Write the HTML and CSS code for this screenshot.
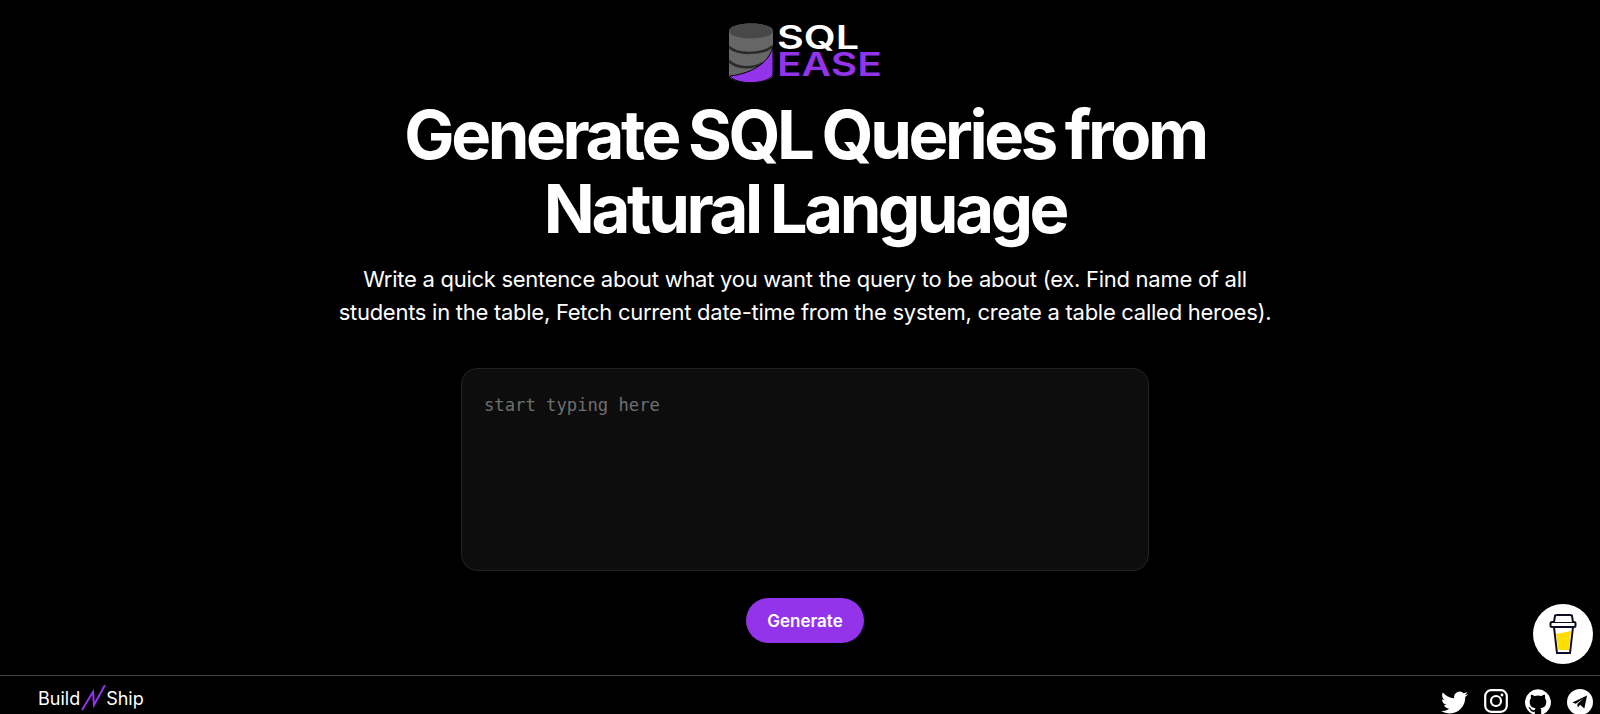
FILE: index.html
```html
<!DOCTYPE html>
<html>
<head>
<meta charset="UTF-8">
<title>SQL Ease</title>
<link rel="stylesheet" href="styles.css">
</head>
<body>

<main class="main">
  <a href="#" class="logo">
    <svg width="44" height="60" viewBox="0 0 44 60">
      <path d="M0 8 C0 -2 44 -2 44 8 L44 52 C44 62 0 62 0 52 Z" fill="#666"/>
      <ellipse cx="22" cy="8" rx="22" ry="7.5" fill="#484848"/>
      <path d="M0 24 C8 32 34 32 44 23" fill="none" stroke="#2a2a2a" stroke-width="2.5"/>
      <path d="M0 38 C8 46 24 46 34 40" fill="none" stroke="#2a2a2a" stroke-width="2.5"/>
      <path d="M44 24 C40 38 26 50 1 53 C6 62 38 62 44 52 Z" fill="#9333ea" stroke="#000" stroke-width="1"/>
    </svg>
    <span class="logo-text">
      <span class="logo-sql">SQL</span>
      <span class="logo-ease">EASE</span>
    </span>
  </a>

  <h1 class="title">Generate SQL Queries from<br>Natural Language</h1>

  <p class="subtitle">Write a quick sentence about what you want the query to be about (ex. Find name of all<br>students in the table, Fetch current date-time from the system, create a table called heroes).</p>

  <textarea class="query" placeholder="start typing here"></textarea>

  <button type="button" class="generate">Generate</button>
</main>

<footer class="footer">
  <a href="#" class="brand">
    Build
    <svg width="26" height="26" viewBox="0 0 26 26">
      <path d="M2 25 L13 7 L14 20 L25 0" fill="none" stroke="#9333ea" stroke-width="2"/>
    </svg>
    Ship
  </a>
  <div class="socials">
    <a href="#"><svg width="27" height="27" viewBox="0 0 24 24" fill="#fff"><path d="M23.95 4.57a10 10 0 0 1-2.82.77 4.96 4.96 0 0 0 2.16-2.72c-.95.55-2 .96-3.13 1.19a4.92 4.92 0 0 0-8.38 4.48C7.69 8.1 4.07 6.13 1.64 3.16a4.82 4.82 0 0 0-.66 2.47c0 1.71.87 3.21 2.19 4.09a4.9 4.9 0 0 1-2.23-.61v.06a4.92 4.92 0 0 0 3.95 4.83 5 5 0 0 1-2.21.08 4.94 4.94 0 0 0 4.6 3.42A9.87 9.87 0 0 1 0 19.54a14 14 0 0 0 7.56 2.21c9.05 0 14-7.5 14-13.98 0-.21 0-.42-.02-.63a9.94 9.94 0 0 0 2.46-2.55z"/></svg></a>
    <a href="#"><svg width="24" height="24" viewBox="0 0 24 24" fill="none" stroke="#fff"><rect x="1.2" y="1.2" width="21.6" height="21.6" rx="6" stroke-width="2.2"/><circle cx="12" cy="12" r="5" stroke-width="2.2"/><circle cx="18" cy="6" r="1.4" fill="#fff" stroke="none"/></svg></a>
    <a href="#"><svg width="26" height="26" viewBox="0 0 24 24" fill="#fff"><path d="M12 .3a12 12 0 0 0-3.8 23.38c.6.11.82-.26.82-.58l-.01-2.04c-3.34.72-4.04-1.61-4.04-1.61-.55-1.39-1.34-1.76-1.34-1.76-1.09-.74.08-.73.08-.73 1.2.09 1.84 1.24 1.84 1.24 1.07 1.83 2.81 1.3 3.5 1 .1-.78.42-1.31.76-1.61-2.67-.3-5.47-1.33-5.47-5.93 0-1.31.47-2.38 1.24-3.22-.14-.3-.54-1.52.1-3.18 0 0 1-.32 3.3 1.23a11.5 11.5 0 0 1 6 0c2.28-1.55 3.29-1.23 3.29-1.23.64 1.66.24 2.88.12 3.18a4.65 4.65 0 0 1 1.23 3.22c0 4.61-2.8 5.63-5.48 5.92.42.36.81 1.1.81 2.22l-.01 3.29c0 .32.21.7.82.58A12 12 0 0 0 12 .3"/></svg></a>
    <a href="#"><svg width="26" height="26" viewBox="0 0 24 24"><circle cx="12" cy="12" r="12" fill="#fff"/><path d="M5 12.5 L18.5 6 L16 18 L12 14.5 L10 17 L9.5 13.8 L15.5 8.5 L8 13.5 Z" fill="#000"/></svg></a>
  </div>
</footer>

<a href="#" class="coffee">
  <svg width="28" height="42" viewBox="0 0 28 42">
    <path d="M5 14 L24 14 L21 40 L8 40 Z" fill="#fff" stroke="#0d0c22" stroke-width="2"/>
    <path d="M7 21 L22 18 L20 37 L9.5 37 Z" fill="#ffdd00"/>
    <rect x="1.5" y="9" width="25" height="5" rx="1.5" fill="#fff" stroke="#0d0c22" stroke-width="2"/>
    <path d="M5 9 L6 3 Q6 2 8 2 L21 2 Q23 2 23 3 L24 9" fill="#fff" stroke="#0d0c22" stroke-width="2"/>
  </svg>
</a>

</body>
</html>
```

FILE: styles.css
```css
html, body {
  height: 100%;
}

body {
  margin: 0;
  background-color: #000;
  color: #fff;
  font-family: "Inter", "Liberation Sans", sans-serif;
  overflow: hidden;
}

a {
  color: #fff;
  text-decoration: none;
}

.main {
  height: 675px;
  box-sizing: border-box;
  padding: 23px 0 0 10px;
  display: flex;
  flex-direction: column;
  align-items: center;
}

.logo {
  display: flex;
  width: 153px;
  height: 60px;
  gap: 4px;
}

.logo-text {
  display: flex;
  flex-direction: column;
  gap: 3px;
  padding-top: 3px;
}

/* no squared font installed, so stretch the letters sideways */
.logo-sql, .logo-ease {
  display: block;
  height: 24px;
  font-size: 32px;
  line-height: 24px;
  font-weight: 600;
  transform-origin: left center;
}

.logo-sql {
  color: #fff;
  transform: scaleX(1.29);
}

.logo-ease {
  color: #9333ea;
  transform: scaleX(1.27);
}

.title {
  margin: 15px 0 0 0;
  font-size: 67px;
  line-height: 74px;
  font-weight: 700;
  letter-spacing: -3.4px;
  word-spacing: -2.5px;
  text-align: center;
}

.subtitle {
  margin: 17px 0 0 0;
  font-size: 22px;
  line-height: 33px;
  letter-spacing: -0.27px;
  text-align: center;
}

.query {
  width: 688px;
  height: 203px;
  margin-top: 39px;
  padding: 26px 22px 22px 22px;
  box-sizing: border-box;
  background-color: #0d0d0d;
  border: 1px solid #222;
  border-radius: 16px;
  color: #fff;
  font-family: "DejaVu Sans Mono", monospace;
  font-size: 17.2px;
  resize: none;
  outline: none;
}

.query::placeholder {
  color: #6f6f6f;
  opacity: 1;
}

.generate {
  display: block;
  width: 118px;
  height: 45px;
  margin-top: 27px;
  background-color: #9333ea;
  color: #fff;
  border: none;
  border-radius: 23px;
  font-family: "Inter", sans-serif;
  font-size: 17px;
  font-weight: 600;
  cursor: pointer;
}

.footer {
  height: 39px;
  box-sizing: border-box;
  border-top: 1px solid #444;
  padding: 9px 7px 0 38px;
  display: flex;
  justify-content: space-between;
  align-items: flex-start;
}

.brand {
  display: flex;
  align-items: center;
  height: 26px;
  font-size: 18px;
}

.socials {
  display: flex;
  align-items: center;
  gap: 16.5px;
  margin-top: 4px;
}

.socials a {
  display: block;
  height: 27px;
}

.coffee {
  position: absolute;
  left: 1533px;
  top: 604px;
  width: 60px;
  height: 60px;
  border-radius: 50%;
  background-color: #fff;
  display: flex;
  align-items: center;
  justify-content: center;
}
```
